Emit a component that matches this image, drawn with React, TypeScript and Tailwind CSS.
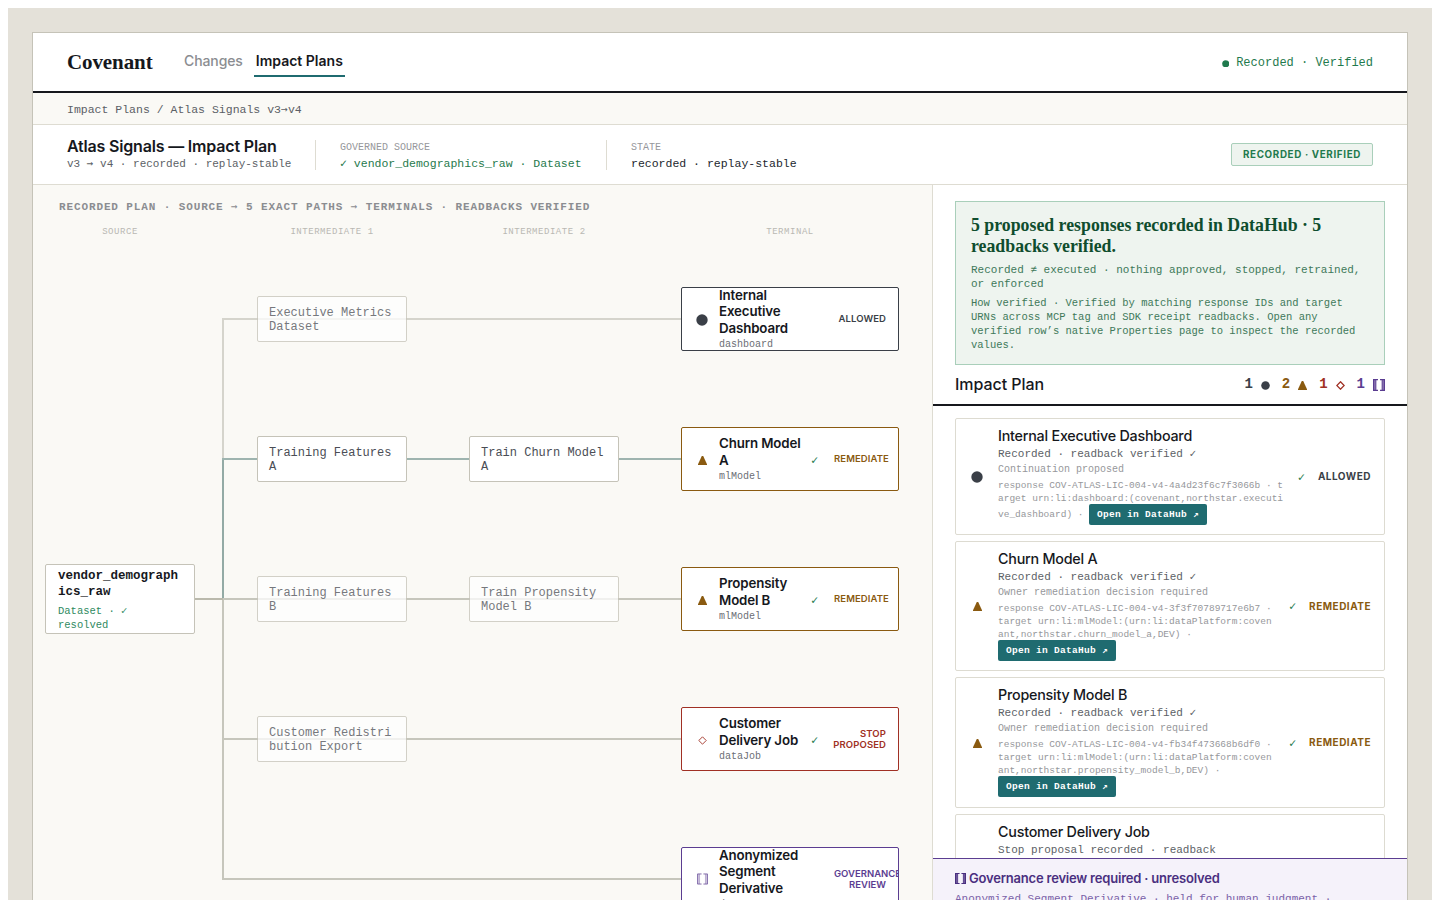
import type { ReactNode } from 'react';

type Outcome = 'allowed' | 'remediate' | 'stop' | 'review';

const OUTCOME_TEXT: Record<Outcome, string> = {
  allowed: 'text-[#3a3f47]',
  remediate: 'text-[#8a5a10]',
  stop: 'text-[#a03024]',
  review: 'text-[#5b3d91]',
};

const OUTCOME_BORDER: Record<Outcome, string> = {
  allowed: 'border-[#3a3f47]',
  remediate: 'border-[#8a5a10]',
  stop: 'border-[#a03024]',
  review: 'border-[#5b3d91]',
};

const IconDot = ({ className = 'w-3 h-3' }: { className?: string }) => (
  <svg className={className} viewBox="0 0 12 12" fill="currentColor" aria-hidden>
    <circle cx="6" cy="6" r="5.7" />
  </svg>
);
const IconTriangle = ({ className = 'w-[9px] h-[9px]' }: { className?: string }) => (
  <svg className={className} viewBox="0 0 9 9" fill="currentColor" aria-hidden>
    <path d="M3.8 0h1.4L9 8.2V9H0V8.2z" />
  </svg>
);
const IconDiamond = ({ className = 'w-[9px] h-[9px]', strokeWidth = 0.9 }: { className?: string; strokeWidth?: number }) => (
  <svg className={className} viewBox="0 0 9 9" fill="none" stroke="currentColor" strokeWidth={strokeWidth} aria-hidden>
    <path d="M4.5 0.8L8.2 4.5L4.5 8.2L0.8 4.5z" />
  </svg>
);
const IconBrackets = ({ className = 'w-3 h-3', bold = false }: { className?: string; bold?: boolean }) => (
  <svg className={className} viewBox="0 0 12 12" fill="none" stroke="currentColor" aria-hidden>
    <path d="M5 0.5H0.5V11.5H5M7 0.5H11.5V11.5H7" strokeWidth={bold ? 1.4 : 1} />
    <path d="M2.3 0.5V11.5M9.7 0.5V11.5" strokeWidth={bold ? 2.2 : 2} opacity={bold ? 0.85 : 0.5} />
  </svg>
);

function OutcomeIcon({ outcome }: { outcome: Outcome }) {
  if (outcome === 'allowed') return <IconDot className="w-3 h-3" />;
  if (outcome === 'remediate') return <IconTriangle />;
  if (outcome === 'stop') return <IconDiamond />;
  return <IconBrackets className="w-[11px] h-3" />;
}

const MONO = "font-['Liberation_Mono','DejaVu_Sans_Mono',monospace]";
const SERIF = "font-['Liberation_Serif',serif]";

const Arrow = () => <span className="font-['DejaVu_Sans_Mono',monospace] font-normal">→</span>;

interface StepProps {
  place: string;
  lines: string[];
  active?: boolean;
}

function StepNode({ place, lines, active = false }: StepProps) {
  return (
    <div
      className={`absolute flex h-[46px] w-[150px] flex-col justify-center rounded-[2px] border border-[#c5c3b8] bg-white pt-px pl-[11px] text-[12px] leading-[14px] text-[#4a4d55] ${MONO} ${place} ${active ? '' : 'opacity-75'}`}
    >
      {lines.map((line) => (
        <span key={line} className="whitespace-pre">{line}</span>
      ))}
    </div>
  );
}

interface TerminalProps {
  place: string;
  outcome: Outcome;
  title: string[];
  kind: string;
  status: string[];
  checked?: boolean;
  statusAlign?: string;
}

function TerminalNode({ place, outcome, title, kind, status, checked = false, statusAlign = 'items-end' }: TerminalProps) {
  return (
    <div
      className={`absolute left-[648px] flex h-16 w-[218px] items-center overflow-hidden rounded-[2px] border bg-white pr-3 ${OUTCOME_BORDER[outcome]} ${place}`}
    >
      <div className={`flex w-[37px] shrink-0 justify-center pl-[3px] pt-[2px] ${OUTCOME_TEXT[outcome]}`}>
        <OutcomeIcon outcome={outcome} />
      </div>
      <div className="w-[90px] shrink-0 pt-[2px] whitespace-nowrap">
        <div className="text-[13.3px] leading-[16.5px] font-semibold tracking-[-0.13px] text-[#16181d]">
          {title.map((line) => (
            <div key={line}>{line}</div>
          ))}
        </div>
        <div className={`pt-px text-[10px] leading-[16px] text-[#6b6e75] ${MONO}`}>{kind}</div>
      </div>
      <div className={`w-[11px] shrink-0 pt-[3px] text-center text-[12px] text-[#1f7a4d] ${MONO}`}>{checked && '✓'}</div>
      <div
        className={`ml-[14px] flex w-[52px] shrink-0 flex-col pb-px text-[9.5px] leading-[11px] font-semibold tracking-[0.1px] whitespace-nowrap ${statusAlign} ${OUTCOME_TEXT[outcome]}`}
      >
        {status.map((line) => (
          <span key={line}>{line}</span>
        ))}
      </div>
    </div>
  );
}

function OpenButton() {
  return (
    <button
      type="button"
      className={`h-[21px] rounded-[2px] bg-[#1f6b70] px-2 text-[9.5px] leading-[22px] font-bold tracking-[0.3px] whitespace-pre text-white ${MONO}`}
    >
      Open in DataHub ↗
    </button>
  );
}

interface PlanCardProps {
  outcome: Outcome;
  title: string;
  summary: string;
  note?: string;
  refs?: string[];
  trailing?: string;
  status?: string;
  height: string;
}

function PlanCard({ outcome, title, summary, note, refs = [], trailing, status, height }: PlanCardProps) {
  return (
    <div className={`flex shrink-0 items-center rounded-[2px] border border-[#dddbd1] bg-white pr-[13px] pl-[14px] ${height}`}>
      <div className={`flex w-[14px] shrink-0 justify-center pt-px ${OUTCOME_TEXT[outcome]}`}>
        {note && <OutcomeIcon outcome={outcome} />}
      </div>
      <div className={`ml-[14px] min-w-0 flex-1 self-start whitespace-nowrap pt-2 ${MONO}`}>
        <h3 className="font-['Inter',sans-serif] text-[14.3px] leading-[18px] font-medium tracking-[-0.22px] text-[#16181d]">{title}</h3>
        <p className="pt-px text-[11px] leading-[17px] text-[#5c5f66]">{summary}</p>
        {note && <p className="text-[10px] leading-[13px] text-[#96979b]">{note}</p>}
        <div className="mt-[3px] text-[9.5px] leading-[13px] text-[#96979b]">
          {refs.map((line) => (
            <div key={line}>{line}</div>
          ))}
          {note && (
            <div className="-mt-px flex items-center">
              {trailing && <span className="w-[91px] whitespace-pre">{trailing}</span>}
              <OpenButton />
            </div>
          )}
        </div>
      </div>
      {status && (
        <div className="flex items-center gap-[13px]">
          <span className={`pt-[2px] text-[12px] text-[#1f7a4d] ${MONO}`}>✓</span>
          <span className={`text-[10px] font-bold tracking-[0.5px] ${OUTCOME_TEXT[outcome]}`}>{status}</span>
        </div>
      )}
    </div>
  );
}

function Count({ tone, value, children }: { tone: Outcome; value: number; children: ReactNode }) {
  return (
    <span className={`flex items-center gap-[8px] ${OUTCOME_TEXT[tone]}`}>
      {value}
      {children}
    </span>
  );
}

function PlanGraph() {
  return (
    <section className="relative w-[899px] shrink-0 overflow-hidden bg-[#faf9f5]">
      <h2 className={`pt-[14px] pl-[26px] text-[11px] leading-[16px] font-bold tracking-[0.88px] text-[#8b8d91] ${MONO}`}>
        RECORDED PLAN · SOURCE <Arrow /> 5 EXACT PATHS <Arrow /> TERMINALS · READBACKS VERIFIED
      </h2>
      <div className={`mt-[10px] flex gap-[62px] pl-3 text-center text-[9px] leading-[14px] tracking-[0.54px] text-[#b9b8b3] ${MONO}`}>
        <span className="w-[150px]">SOURCE</span>
        <span className="w-[150px]">INTERMEDIATE 1</span>
        <span className="w-[150px]">INTERMEDIATE 2</span>
        <span className="w-[218px]">TERMINAL</span>
      </div>

      {/* Connectors between source, steps and terminals */}
      <svg className="absolute top-0 left-0" width="899" height="716" fill="none" strokeWidth="2" aria-hidden>
        <path d="M190 134V274M189 134H648" stroke="#d5d4cc" />
        <path d="M190 414V694H648M190 554H648" stroke="#c6c6bc" />
        <path d="M162 414H191" stroke="#bab9ac" />
        <path d="M190 414H648" stroke="#c6c6bc" />
        <path d="M190 413V274" stroke="#93aaa5" />
        <path d="M189 274H648" stroke="#9eb4af" />
      </svg>

      <div className={`absolute top-[379px] left-3 flex h-[70px] w-[150px] flex-col justify-center rounded-[2px] border border-[#c5c3b8] bg-white pt-px pl-3 ${MONO}`}>
        <span className="text-[12.5px] leading-[16px] font-bold text-[#16181d]">vendor_demograph<br />ics_raw</span>
        <span className="mt-1 text-[10.5px] leading-[14px] text-[#2f8a61]">Dataset · ✓<br />resolved</span>
      </div>

      <StepNode place="left-[224px] top-[111px]" lines={['Executive Metrics', 'Dataset']} />
      <StepNode place="left-[224px] top-[251px]" lines={['Training Features', 'A']} active />
      <StepNode place="left-[436px] top-[251px]" lines={['Train Churn Model', 'A']} active />
      <StepNode place="left-[224px] top-[391px]" lines={['Training Features', 'B']} />
      <StepNode place="left-[436px] top-[391px]" lines={['Train Propensity', 'Model B']} />
      <StepNode place="left-[224px] top-[531px]" lines={['Customer Redistri', 'bution Export']} />

      <TerminalNode place="top-[102px]" outcome="allowed" title={['Internal', 'Executive', 'Dashboard']} kind="dashboard" status={['ALLOWED']} />
      <TerminalNode place="top-[242px]" outcome="remediate" title={['Churn Model', 'A']} kind="mlModel" status={['REMEDIATE']} statusAlign="items-start" checked />
      <TerminalNode place="top-[382px]" outcome="remediate" title={['Propensity', 'Model B']} kind="mlModel" status={['REMEDIATE']} statusAlign="items-start" checked />
      <TerminalNode place="top-[522px]" outcome="stop" title={['Customer', 'Delivery Job']} kind="dataJob" status={['STOP', 'PROPOSED']} checked />
      <div className="absolute top-[662px] left-[648px] flex h-16 w-[218px] items-center overflow-hidden rounded-[2px] border border-[#5b3d91] bg-white text-[#5b3d91]">
        <div className="flex w-[37px] shrink-0 justify-center pl-[3px]">
          <IconBrackets className="w-[11px] h-3 opacity-80" />
        </div>
        <div className="w-[90px] shrink-0 pt-[2px]">
          <div className="text-[13.3px] leading-[16.5px] font-semibold tracking-[-0.13px] text-[#16181d]">
            Anonymized<br />Segment<br />Derivative
          </div>
          <div className={`pt-px text-[10px] leading-[16px] text-[#6b6e75] ${MONO}`}>dataset</div>
        </div>
        <div className="ml-[25px] w-[52px] shrink-0 pb-px text-right text-[9.5px] leading-[11px] font-semibold">GOVERNANCE REVIEW</div>
      </div>
    </section>
  );
}

function PlanPanel() {
  return (
    <aside className="flex min-w-0 flex-1 flex-col border-l border-[#dedcd2] bg-white">
      <div className="mx-[22px] mt-4 h-[164px] shrink-0 border border-[#a9cfba] bg-[#eef4ef] px-[15px] pt-[13px]">
        <h2 className={`text-[17.8px] leading-[21px] font-bold whitespace-nowrap text-[#0f4d2e] ${SERIF}`}>
          5 proposed responses recorded in DataHub · 5<br />readbacks verified.
        </h2>
        <p className={`mt-[6px] text-[11px] leading-[14px] whitespace-nowrap text-[#40795a] ${MONO}`}>
          Recorded ≠ executed · nothing approved, stopped, retrained,<br />or enforced
        </p>
        <p className={`mt-[5px] text-[10.5px] leading-[14px] whitespace-nowrap text-[#40795a] ${MONO}`}>
          How verified · Verified by matching response IDs and target<br />
          URNs across MCP tag and SDK receipt readbacks. Open any<br />
          verified row’s native Properties page to inspect the recorded<br />
          values.
        </p>
      </div>

      <div className="flex h-[41px] shrink-0 items-center justify-between border-b-2 border-[#16181d] px-[22px]">
        <h2 className="pb-px text-[16px] font-medium tracking-[-0.05px] text-[#16181d]">Impact Plan</h2>
        <div className={`flex items-center gap-3 text-[14px] font-bold ${MONO}`}>
          <Count tone="allowed" value={1}><IconDot className="w-[9px] h-[9px] mt-[1px]" /></Count>
          <Count tone="remediate" value={2}><IconTriangle className="w-[9px] h-[9px] mt-[1px]" /></Count>
          <Count tone="stop" value={1}><IconDiamond className="w-[9px] h-[9px] mt-[1px]" strokeWidth={1.3} /></Count>
          <Count tone="review" value={1}><IconBrackets className="w-3 h-3 mt-[1px]" bold /></Count>
        </div>
      </div>

      <div className="flex h-[452px] shrink-0 flex-col gap-[6px] overflow-hidden px-[22px] pt-3">
        <PlanCard
          outcome="allowed"
          title="Internal Executive Dashboard"
          summary="Recorded · readback verified ✓"
          note="Continuation proposed"
          refs={['response COV-ATLAS-LIC-004-v4-4a4d23f6c7f3066b · t', 'arget urn:li:dashboard:(covenant,northstar.executi']}
          trailing="ve_dashboard) · "
          status="ALLOWED"
          height="h-[117px]"
        />
        <PlanCard
          outcome="remediate"
          title="Churn Model A"
          summary="Recorded · readback verified ✓"
          note="Owner remediation decision required"
          refs={['response COV-ATLAS-LIC-004-v4-3f3f70789717e6b7 ·', 'target urn:li:mlModel:(urn:li:dataPlatform:coven', 'ant,northstar.churn_model_a,DEV) ·']}
          status="REMEDIATE"
          height="h-[130px]"
        />
        <PlanCard
          outcome="remediate"
          title="Propensity Model B"
          summary="Recorded · readback verified ✓"
          note="Owner remediation decision required"
          refs={['response COV-ATLAS-LIC-004-v4-fb34f473668b6df0 ·', 'target urn:li:mlModel:(urn:li:dataPlatform:coven', 'ant,northstar.propensity_model_b,DEV) ·']}
          status="REMEDIATE"
          height="h-[131px]"
        />
        <PlanCard outcome="stop" title="Customer Delivery Job" summary="Stop proposal recorded · readback" height="h-[130px]" />
      </div>

      <div className="flex-1 border-t border-[#5b3d91] bg-[#f5f2fa] px-[22px] pt-[10px]">
        <h3 className="flex items-center gap-[3px] text-[13px] leading-[18px] font-semibold tracking-[-0.2px] text-[#4a2f80]">
          <IconBrackets className="mt-px w-[11px] h-[11px]" bold />
          Governance review required · unresolved
        </h3>
        <p className={`mt-[4px] text-[11px] leading-[16px] whitespace-nowrap text-[#7a61a8] ${MONO}`}>
          Anonymized Segment Derivative · held for human judgment ·
        </p>
      </div>
    </aside>
  );
}

export default function App() {
  return (
    <div className="h-[900px] overflow-hidden bg-white px-2 pt-2 font-['Inter',sans-serif]">
      <div className="h-[892px] bg-[#e4e1d9] px-6 pt-6">
        <div className="flex h-[868px] flex-col border border-b-0 border-[#c5c3b8] bg-white">
          <header className="flex h-[60px] shrink-0 items-center justify-between border-b-2 border-[#16181d] px-[34px]">
            <div className="flex items-center">
              <span className={`w-[85px] pt-[2px] text-[21px] font-bold tracking-[-0.1px] text-[#16181d] ${SERIF}`}>Covenant</span>
              <nav className="ml-[30px] flex gap-[9px] pt-[3px] text-[14px] leading-[18px]">
                <a className="border-b-2 border-transparent px-[2px] pt-[2px] pb-[5px] font-medium tracking-[-0.1px] text-[#8b8d91]">Changes</a>
                <a className="border-b-2 border-[#1f6b70] px-[2px] pt-[2px] pb-[5px] font-semibold text-[#16181d]">Impact Plans</a>
              </nav>
            </div>
            <div className={`flex items-center gap-[7px] pt-[2px] text-[12px] text-[#1f7a4d] ${MONO}`}>
              <IconDot className="mt-[1px] h-[7.5px] w-[7.5px]" />
              Recorded · Verified
            </div>
          </header>

          <div className={`h-8 shrink-0 border-b border-[#dedcd2] bg-[#faf9f5] px-[34px] text-[11.5px] leading-[33px] text-[#5c5f66] ${MONO}`}>
            Impact Plans / Atlas Signals v3<Arrow />v4
          </div>

          <div className="flex h-[60px] shrink-0 items-center border-b border-[#dedcd2] px-[34px] whitespace-nowrap">
            <div className="w-[248px] pt-px">
              <h1 className="text-[16px] leading-[18px] font-semibold tracking-[-0.18px] text-[#16181d]">Atlas Signals — Impact Plan</h1>
              <p className={`text-[11px] leading-[17px] text-[#5c5f66] ${MONO}`}>v3 <Arrow /> v4 · recorded · replay-stable</p>
            </div>
            <div className={`h-[30px] w-[291px] border-l border-[#dedcd2] pl-6 ${MONO}`}>
              <p className="pt-px text-[10px] leading-[14px] text-[#96979b]">GOVERNED SOURCE</p>
              <p className="mt-px text-[11.5px] leading-[16px] text-[#1f7a4d]">✓ vendor_demographics_raw · Dataset</p>
            </div>
            <div className={`h-[30px] border-l border-[#dedcd2] pl-6 ${MONO}`}>
              <p className="pt-px text-[10px] leading-[14px] text-[#96979b]">STATE</p>
              <p className="mt-px text-[11.5px] leading-[16px] text-[#22262d]">recorded · replay-stable</p>
            </div>
            <span className="ml-auto flex h-[23px] w-[142px] items-center justify-center rounded-[2px] border border-[#a9cfba] bg-[#eef4ef] pt-px text-[9.8px] font-bold tracking-[0.65px] text-[#1f7a4d]">
              RECORDED · VERIFIED
            </span>
          </div>

          <main className="flex min-h-0 flex-1">
            <PlanGraph />
            <PlanPanel />
          </main>
        </div>
      </div>
    </div>
  );
}
